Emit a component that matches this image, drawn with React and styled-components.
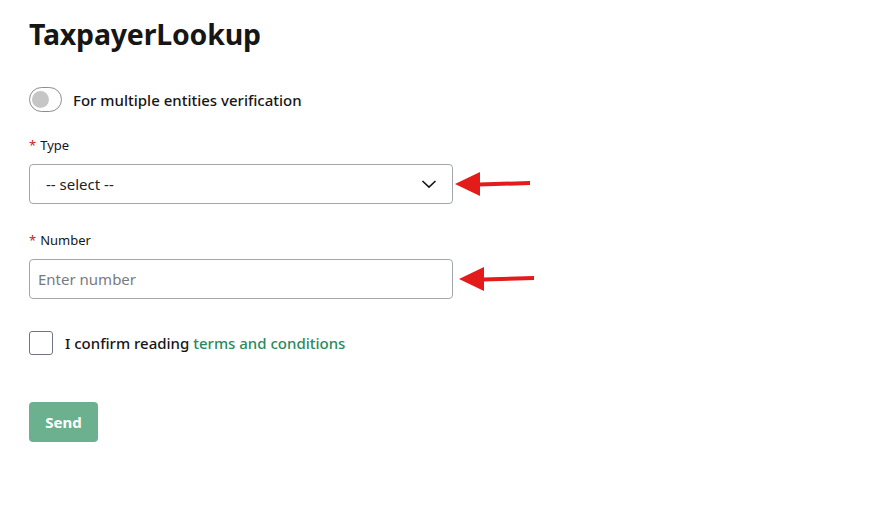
import styled, { createGlobalStyle } from "styled-components";

const GlobalStyle = createGlobalStyle`
  html, body {
    margin: 0;
    background: #ffffff;
  }
  body {
    font-family: "Noto Sans", "Open Sans", Arial, sans-serif;
    color: #161616;
  }
`;

const Page = styled.main`
  padding: 14px 0 0 29px;
  display: flex;
  flex-direction: column;
`;

const Title = styled.h1`
  margin: 0;
  font-size: 28.5px;
  line-height: 40px;
  font-weight: 700;
  letter-spacing: -0.2px;
  color: #161616;
`;

const ToggleRow = styled.label`
  margin-top: 33px;
  display: flex;
  align-items: center;
  gap: 11px;
  font-size: 15px;
  font-weight: 500;
  color: #161616;
`;

const Toggle = styled.span`
  width: 33px;
  height: 25px;
  box-sizing: border-box;
  border: 1.5px solid #8d8d8d;
  border-radius: 13px;
  display: flex;
  align-items: center;
  padding: 0 2px;
  &::before {
    content: "";
    width: 17px;
    height: 17px;
    border-radius: 50%;
    background: #c6c6c6;
  }
`;

const Field = styled.div`
  margin-top: ${(p) => p.$top}px;
  display: flex;
  flex-direction: column;
`;

const Label = styled.label`
  font-size: 13px;
  line-height: 18px;
  color: #161616;
  margin-bottom: 10px;
`;

const Star = styled.span`
  color: #c41f1f;
  margin-right: 4px;
`;

const FieldRow = styled.div`
  display: flex;
  align-items: center;
`;

const Box = styled.div`
  width: 424px;
  height: 40px;
  box-sizing: border-box;
  border: 1px solid #a2a6ad;
  border-radius: 4px;
  display: flex;
  align-items: center;
  justify-content: space-between;
  padding: 0 15px 0 ${(p) => p.$pad}px;
  font-size: 15px;
  color: ${(p) => (p.$muted ? "#767b83" : "#222222")};
`;

const Arrow = styled.svg`
  margin-left: ${(p) => p.$gap}px;
  display: block;
`;

const CheckRow = styled.label`
  margin-top: 32px;
  display: flex;
  align-items: center;
  gap: 12px;
  font-size: 15px;
  font-weight: 500;
  color: #161616;
`;

const CheckBox = styled.span`
  width: 24px;
  height: 24px;
  box-sizing: border-box;
  border: 1.5px solid #6f7683;
  border-radius: 3px;
`;

const Link = styled.span`
  color: #2a8a5c;
`;

const Button = styled.button`
  margin-top: 47px;
  align-self: flex-start;
  width: 69px;
  height: 40px;
  border: none;
  border-radius: 4px;
  background: #6bb190;
  color: #ffffff;
  font-family: inherit;
  font-size: 15px;
  font-weight: 700;
`;

const RedArrow = ({ gap }) => (
  <Arrow $gap={gap} width="80" height="28" viewBox="0 0 80 28">
    <path d="M25 12.5 L76 11 L76 15 L25 16.5 Z" fill="#e31b1b" />
    <path d="M1 14 L26 2 L26 26 Z" fill="#e31b1b" />
  </Arrow>
);

export default function App() {
  return (
    <>
      <GlobalStyle />
      <Page>
        <Title>TaxpayerLookup</Title>
        <ToggleRow>
          <Toggle />
          For multiple entities verification
        </ToggleRow>

        <Field $top={24}>
          <Label>
            <Star>*</Star>Type
          </Label>
          <FieldRow>
            <Box $pad={16}>
              -- select --
              <svg width="16" height="10" viewBox="0 0 16 10">
                <path d="M1.5 2 L8 8.2 L14.5 2" fill="none" stroke="#161616" strokeWidth="1.6" />
              </svg>
            </Box>
            <RedArrow gap={1} />
          </FieldRow>
        </Field>

        <Field $top={27}>
          <Label>
            <Star>*</Star>Number
          </Label>
          <FieldRow>
            <Box $pad={8} $muted>Enter number</Box>
            <RedArrow gap={5} />
          </FieldRow>
        </Field>

        <CheckRow>
          <CheckBox />
          <span>
            I confirm reading <Link>terms and conditions</Link>
          </span>
        </CheckRow>

        <Button>Send</Button>
      </Page>
    </>
  );
}
